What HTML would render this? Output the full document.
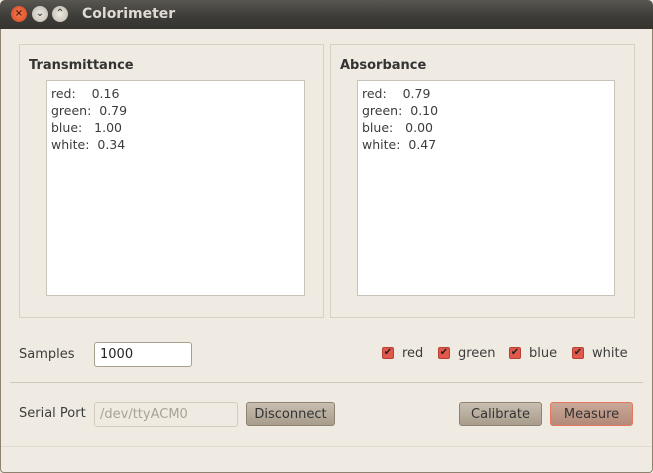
<!DOCTYPE html><html><head><style>
*{margin:0;padding:0;box-sizing:border-box}
body{width:653px;height:473px;position:relative;overflow:hidden;background:#f0ebe2;font-family:"DejaVu Sans",sans-serif;font-size:12px;color:#3c3c3c}
.a{position:absolute}
#tb{left:0;top:0;width:653px;height:29px;background:linear-gradient(#58564f,#3c3b37 60%,#35342f);border-radius:5px 5px 0 0}
#win{left:0;top:29px;width:653px;height:444px;border:1px solid #8d8270;border-top:none;border-radius:0 0 4px 4px}
.btn{width:16px;height:16px;border-radius:50%;top:6px;font-size:10px;text-align:center;line-height:16px;color:#444;font-weight:bold}
.fr{border:1px solid #d7d1c5}
.tx{background:#fff;border:1px solid #c9c2b6;padding:4px 4px;line-height:17px;white-space:pre;font-size:12.5px}
h3{font-size:13px;font-weight:bold;color:#333}
.cb{width:12px;height:12px;border-radius:2px;background:#e2584a;border:1px solid #b54236;color:#222;font-size:10px;line-height:10px;text-align:center;top:347px}
.b{border:1px solid #8e8272;border-radius:3px;background:linear-gradient(#c8bfb1,#a89c8b);text-align:center;line-height:23px;color:#333;height:24px;top:402px;font-size:13px}
.l{font-size:13px;top:346px}
</style></head><body>
<div class="a" id="tb"></div>
<div class="a btn" style="left:11px;background:radial-gradient(#f27b55,#d9481f);color:#5a1e10">×</div>
<div class="a btn" style="left:32px;background:radial-gradient(#ebe8e0,#bdb8ad)">⌄</div>
<div class="a btn" style="left:52px;background:radial-gradient(#ebe8e0,#bdb8ad)">⌃</div>
<div class="a" style="left:82px;top:6px;color:#dfdbd2;font-weight:bold;font-size:14px">Colorimeter</div>
<div class="a" id="win"></div>
<div class="a fr" style="left:19px;top:44px;width:305px;height:274px"></div>
<div class="a fr" style="left:330px;top:44px;width:305px;height:274px"></div>
<h3 class="a" style="left:29px;top:58px">Transmittance</h3>
<h3 class="a" style="left:340px;top:58px">Absorbance</h3>
<div class="a tx" style="left:46px;top:80px;width:259px;height:216px">red:    0.16
green:  0.79
blue:   1.00
white:  0.34</div>
<div class="a tx" style="left:357px;top:80px;width:258px;height:216px">red:    0.79
green:  0.10
blue:   0.00
white:  0.47</div>
<div class="a l" style="left:19px;top:347px">Samples</div>
<div class="a" style="left:94px;top:342px;width:98px;height:25px;background:#fff;border:1px solid #a89e8e;border-radius:3px;padding:4px 5px;color:#222;font-size:13px">1000</div>
<div class="a cb" style="left:382px">✔</div><div class="a l" style="left:402px">red</div>
<div class="a cb" style="left:438px">✔</div><div class="a l" style="left:458px">green</div>
<div class="a cb" style="left:509px">✔</div><div class="a l" style="left:529px">blue</div>
<div class="a cb" style="left:572px">✔</div><div class="a l" style="left:592px">white</div>
<div class="a" style="left:10px;top:382px;width:633px;height:1px;background:#cfc8bc"></div>
<div class="a" style="left:19px;top:406px;font-size:13px">Serial Port</div>
<div class="a" style="left:94px;top:402px;width:144px;height:25px;border:1px solid #d4ccbd;border-radius:3px;padding:4px 5px;color:#a8a296;font-size:13px">/dev/ttyACM0</div>
<div class="a b" style="left:246px;width:89px">Disconnect</div>
<div class="a b" style="left:459px;width:83px">Calibrate</div>
<div class="a b" style="left:550px;width:83px;border-color:#e57860;background:linear-gradient(#caa898,#b48a78)">Measure</div>
<div class="a" style="left:1px;top:446px;width:651px;height:1px;background:#e2dccf"></div>
</body></html>
